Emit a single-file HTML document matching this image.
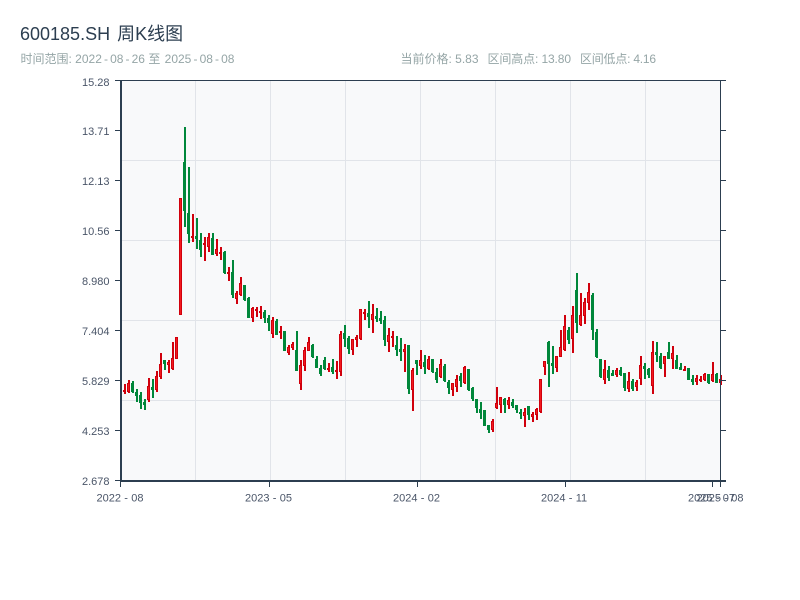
<!DOCTYPE html>
<html lang="zh">
<head>
<meta charset="utf-8">
<title>600185.SH 周K线图</title>
<style>
html,body{margin:0;padding:0;background:#fff;width:800px;height:600px;overflow:hidden}
svg{display:block;font-family:"Liberation Sans","Noto Sans CJK SC",sans-serif}
.yl{font-size:11px;fill:#4a5568;text-anchor:end}
.xl{font-size:11px;fill:#4a5568}
.sub{font-size:12px;fill:#95a5a6}
</style>
</head>
<body>
<svg width="800" height="600" viewBox="0 0 800 600" xmlns="http://www.w3.org/2000/svg">
<text x="20" y="40" font-size="18" fill="#2c3e50">600185.SH <tspan dx="2">周K线图</tspan></text>
<text x="20.500" y="63" class="sub">时间范围: 2022<tspan dx="2.100">-</tspan><tspan dx="2.100">08</tspan><tspan dx="2.100">-</tspan><tspan dx="2.100">26</tspan> 至 <tspan dx="1">2025</tspan><tspan dx="2.100">-</tspan><tspan dx="2.100">08</tspan><tspan dx="2.100">-</tspan><tspan dx="2.100">08</tspan></text>
<text x="400.500" y="63" class="sub">当前价格: 5.83</text>
<text x="487.500" y="63" class="sub" textLength="83.500">区间高点: 13.80</text>
<text x="580" y="63" class="sub" textLength="76">区间低点: 4.16</text>

<rect x="121" y="81" width="599" height="400" fill="#f8f9fa"/>
<g shape-rendering="crispEdges">
<path fill="none" stroke="#e1e4e9" stroke-width="1" d="M122 160.500H720M122 240.500H720M122 320.500H720M122 400.500H720M195.500 81V480M270.500 81V480M345.500 81V480M420.500 81V480M495.500 81V480M570.500 81V480M645.500 81V480"/>

<path fill="none" stroke="#00873a" stroke-width="2" d="M133 381V393M137 389V402M141 392V409M145 399V410M153 379V398M165 360V370M185 127V227M189 167V243M197 218V249M201 233V257M213 233V255M225 251V274M233 260V298M245 285V301M249 297V318M265 310V323M269 315V331M277 319V335M285 331V351M297 331V371M313 344V358M317 356V368M321 365V376M325 357V370M333 359V374M345 325V347M349 336V354M369 301V328M377 308V322M381 311V324M385 316V346M397 336V356M401 338V361M409 345V394M417 360V375M425 355V374M433 359V373M437 368V383M445 364V382M449 380V394M461 373V387M469 369V391M473 387V401M477 399V413M481 402V419M485 410V426M489 425V433M505 398V413M513 399V408M517 405V413M521 409V419M529 406V420M549 341V387M553 346V374M569 327V344M577 273V333M593 293V340M597 329V358M601 359V378M609 366V381M613 370V376M621 367V376M625 373V391M633 379V391M645 363V379M649 368V378M657 342V362M661 353V369M669 342V359M677 355V369M681 363V370M689 368V380M693 375V385M709 374V384M717 373V383"/>
<path fill="none" stroke="#00873a" stroke-width="3" d="M132.500 383V392M136.500 392V396M140.500 395V403M144.500 402V405M152.500 387V390M164.500 360V364M184.500 162V211M188.500 213V234M196.500 236V239M200.500 240V250M212.500 238V255M224.500 252V273M232.500 272V295M244.500 285V300M248.500 298V318M264.500 312V318M268.500 318V323M276.500 321V335M284.500 331V351M296.500 350V371M312.500 345V357M316.500 359V368M320.500 368V374M324.500 360V369M332.500 367V372M344.500 333V339M348.500 338V349M368.500 313V317M376.500 316V319M380.500 318V321M384.500 320V340M396.500 345V350M400.500 349V352M408.500 345V389M416.500 360V364M424.500 362V367M432.500 359V372M436.500 372V380M444.500 366V381M448.500 382V388M460.500 376V381M468.500 369V390M472.500 388V399M476.500 399V408M480.500 409V413M484.500 410V426M488.500 425V430M504.500 399V405M512.500 402V406M516.500 405V410M520.500 412V414M528.500 406V415M548.500 342V364M552.500 363V366M568.500 330V340M576.500 290V323M592.500 295V330M596.500 332V357M600.500 359V377M608.500 370V378M612.500 373V376M620.500 370V375M624.500 373V388M632.500 381V389M644.500 366V369M648.500 369V375M656.500 352V355M660.500 356V368M668.500 352V359M676.500 360V369M680.500 367V370M688.500 368V380M692.500 379V382M708.500 374V383M716.500 374V383"/>

<path fill="none" stroke="#d0000c" stroke-width="2" d="M125 384V394M129 380V393M149 378V402M157 371V392M161 353V379M169 360V373M173 342V370M177 337V359M181 198V315M193 214V242M205 237V261M209 233V252M217 239V256M221 247V260M229 267V281M237 291V304M241 277V296M253 307V322M257 307V317M261 306V319M273 317V338M281 326V339M289 345V355M293 342V350M301 360V390M305 347V371M309 337V351M329 363V372M337 361V379M341 331V376M353 339V355M357 335V347M361 309V340M365 309V320M373 304V333M389 328V352M393 331V347M405 344V372M413 368V411M421 350V369M429 356V370M441 359V378M453 383V396M457 375V392M465 366V384M493 419V432M497 387V409M501 397V413M509 397V409M525 408V427M533 412V422M537 408V420M541 379V413M545 361V375M557 356V372M561 330V357M565 315V351M573 306V353M581 293V326M585 298V324M589 283V310M605 360V384M617 368V377M629 372V392M637 380V391M641 356V385M653 341V394M665 356V377M673 346V369M685 366V371M697 375V385M701 376V382M705 373V381M713 362V382M721 375V385"/>
<path fill="none" stroke="#d0000c" stroke-width="3" d="M124.500 390V392M128.500 383V392M148.500 386V400M156.500 376V390M160.500 364V377M168.500 362V365M172.500 358V369M176.500 337V359M180.500 198V315M192.500 236V238M204.500 243V245M208.500 237V247M216.500 249V254M220.500 252V254M228.500 272V274M236.500 293V299M240.500 283V295M252.500 308V318M256.500 309V311M260.500 311V313M272.500 320V334M280.500 331V333M288.500 347V353M292.500 344V348M300.500 365V384M304.500 350V366M308.500 342V351M328.500 368V370M336.500 370V372M340.500 334V372M352.500 339V350M356.500 337V340M360.500 309V339M364.500 312V314M372.500 314V320M388.500 335V342M392.500 336V338M404.500 349V352M412.500 370V390M420.500 360V366M428.500 359V369M440.500 364V377M452.500 383V390M456.500 379V387M464.500 367V383M492.500 421V430M496.500 403V408M500.500 397V405M508.500 400V405M524.500 412V416M532.500 414V417M536.500 409V415M540.500 379V412M544.500 361V367M556.500 356V368M560.500 347V357M564.500 326V350M572.500 315V339M580.500 315V325M584.500 302V316M588.500 292V303M604.500 369V380M616.500 370V375M628.500 381V389M636.500 382V387M640.500 365V379M652.500 352V386M664.500 356V364M672.500 353V359M684.500 369V371M696.500 378V382M700.500 379V381M704.500 374V380M712.500 374V381M720.500 379V383"/>
<path fill="none" stroke="#f21a1e" stroke-width="1" d="M128.500 384V391M148.500 387V399M156.500 377V389M160.500 365V376M168.500 363V364M172.500 359V368M176.500 338V358M180.500 199V314M208.500 238V246M216.500 250V253M236.500 294V298M240.500 284V294M252.500 309V317M272.500 321V333M288.500 348V352M292.500 345V347M300.500 366V383M304.500 351V365M308.500 343V350M340.500 335V371M352.500 340V349M356.500 338V339M360.500 310V338M372.500 315V319M388.500 336V341M404.500 350V351M412.500 371V389M420.500 361V365M428.500 360V368M440.500 365V376M452.500 384V389M456.500 380V386M464.500 368V382M492.500 422V429M496.500 404V407M500.500 398V404M508.500 401V404M524.500 413V415M532.500 415V416M536.500 410V414M540.500 380V411M544.500 362V366M556.500 357V367M560.500 348V356M564.500 327V349M572.500 316V338M580.500 316V324M584.500 303V315M588.500 293V302M604.500 370V379M616.500 371V374M628.500 382V388M636.500 383V386M640.500 366V378M652.500 353V385M664.500 357V363M672.500 354V358M696.500 379V381M704.500 375V379M712.500 375V380M720.500 380V382"/>

<g fill="#2c3e50">
<rect x="120" y="81" width="2" height="401"/>
<rect x="120" y="480" width="606" height="2"/>
<rect x="115" y="80" width="611" height="1"/>
<rect x="720" y="80" width="1" height="401"/>
<rect x="115" y="130" width="5" height="1"/>
<rect x="115" y="180" width="5" height="1"/>
<rect x="115" y="230" width="5" height="1"/>
<rect x="115" y="280" width="5" height="1"/>
<rect x="115" y="330" width="5" height="1"/>
<rect x="115" y="380" width="5" height="1"/>
<rect x="115" y="430" width="5" height="1"/>
<rect x="115" y="480" width="5" height="1"/>
<rect x="721" y="130" width="5" height="1"/>
<rect x="721" y="180" width="5" height="1"/>
<rect x="721" y="230" width="5" height="1"/>
<rect x="721" y="280" width="5" height="1"/>
<rect x="721" y="330" width="5" height="1"/>
<rect x="721" y="380" width="5" height="1"/>
<rect x="721" y="430" width="5" height="1"/>
<rect x="120" y="482" width="1" height="5"/>
<rect x="269" y="482" width="1" height="5"/>
<rect x="417" y="482" width="1" height="5"/>
<rect x="565" y="482" width="1" height="5"/>
<rect x="712" y="482" width="1" height="5"/>
<rect x="720" y="482" width="1" height="5"/>
</g>
</g>

<text x="109.500" y="86" class="yl">15.28</text>
<text x="109.500" y="135" class="yl">13.71</text>
<text x="109.500" y="185" class="yl">12.13</text>
<text x="109.500" y="235" class="yl">10.56</text>
<text x="109.500" y="285" class="yl">8.980</text>
<text x="109.500" y="335" class="yl">7.404</text>
<text x="109.500" y="385" class="yl">5.829</text>
<text x="109.500" y="435" class="yl">4.253</text>
<text x="109.500" y="485" class="yl">2.678</text>

<text x="96.500" y="501.500" class="xl">2022<tspan dx="3.300">-</tspan><tspan dx="3.300">08</tspan></text>
<text x="245" y="501.500" class="xl">2023<tspan dx="3.300">-</tspan><tspan dx="3.300">05</tspan></text>
<text x="393" y="501.500" class="xl">2024<tspan dx="3.300">-</tspan><tspan dx="3.300">02</tspan></text>
<text x="541" y="501.500" class="xl">2024<tspan dx="3.300">-</tspan><tspan dx="3.300">11</tspan></text>
<text x="688" y="501.500" class="xl">2025<tspan dx="3.300">-</tspan><tspan dx="3.300">07</tspan></text>
<text x="696.500" y="501.500" class="xl">2025<tspan dx="3.300">-</tspan><tspan dx="3.300">08</tspan></text>
</svg>
</body>
</html>
